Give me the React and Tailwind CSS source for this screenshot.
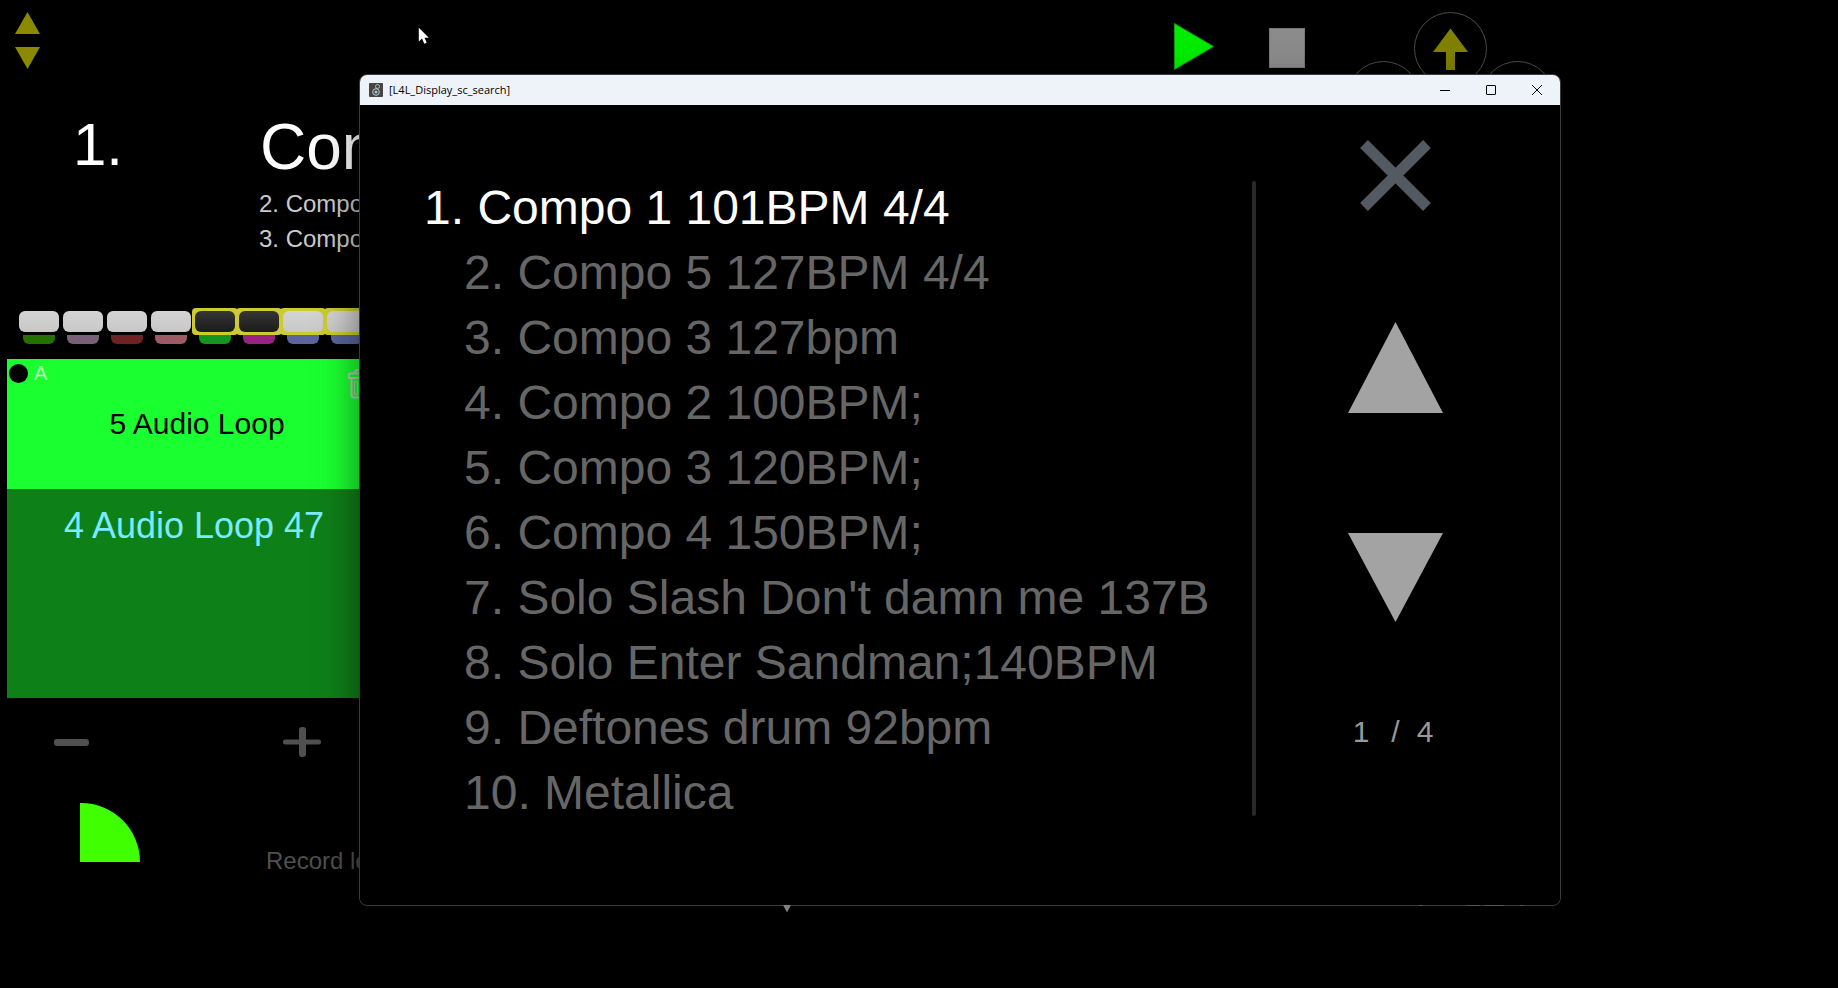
import React from 'react';

const songs = [
	'Compo 1 101BPM 4/4',
	'Compo 5 127BPM 4/4',
	'Compo 3 127bpm',
	'Compo 2 100BPM;',
	'Compo 3 120BPM;',
	'Compo 4 150BPM;',
	"Solo Slash Don't damn me 137B",
	'Solo Enter Sandman;140BPM',
	'Deftones drum 92bpm',
	'Metallica',
];

const LIGHT = 'bg-linear-to-b from-[#d4d4d4] to-[#c8c8c8]';
const DARK = 'bg-linear-to-b from-[#363636] to-[#1c1c1c]';

const pads = [
	{ face: LIGHT, tab: 'bg-[#247000]' },
	{ face: LIGHT, tab: 'bg-[#776078]' },
	{ face: LIGHT, tab: 'bg-[#6e2224]' },
	{ face: LIGHT, tab: 'bg-[#9c5a64]' },
	{ face: DARK, tab: 'bg-[#149420]', armed: true },
	{ face: DARK, tab: 'bg-[#9a2282]', armed: true },
	{ face: LIGHT, tab: 'bg-[#5a659c]', armed: true },
	{ face: LIGHT, tab: 'bg-[#5a659c]', armed: true },
];

const Triangle = ({ down, className }) => (
	<svg viewBox="0 0 100 100" preserveAspectRatio="none" className={className} fill="currentColor">
		<path d={down ? 'M0 0H100L50 100Z' : 'M50 0L100 100H0Z'} />
	</svg>
);

const TopBar = () => (
	<header className="flex h-[104px] items-start">
		<div className="flex flex-col gap-[13px] pl-[15px] pt-3 text-[#8b8900]">
			<button aria-label="Previous" className="block"><Triangle className="block h-[22px] w-[25px]" /></button>
			<button aria-label="Next" className="block"><Triangle down className="block h-[22px] w-[25px]" /></button>
		</div>
		<div className="ml-auto mr-[284px] flex items-start">
			<button aria-label="Play" className="mr-[55px] mt-[23px]">
				<svg width="40" height="47" viewBox="0 0 40 47" className="block"><path d="M.5 .5L39.5 23.5L.5 46.5Z" fill="#00ec00" stroke="#0a9a0a" strokeWidth="1" /></svg>
			</button>
			<button aria-label="Stop" className="mr-[42px] mt-7 h-10 w-9 border border-[#777] bg-[#8b8b8b]" />
			<button aria-label="Navigation pad" className="mt-3">
				<svg width="207" height="92" viewBox="0 0 207 92" className="block" fill="none">
					<g stroke="#4c4c4c">
						<circle cx="103.5" cy="36.5" r="36" />
						<circle cx="36.5" cy="85.5" r="36" />
						<circle cx="170.5" cy="85.5" r="36" />
					</g>
					<path d="M103.5 16.5L121 40H108V58H99V40H86Z" fill="#808000" />
				</svg>
			</button>
		</div>
	</header>
);

const TrashIcon = () => (
	<svg width="30" height="30" viewBox="0 0 30 30" fill="none" stroke="#b4ccb5" strokeWidth="2">
		<path d="M1 9V6Q1 4.500 2.500 4.500H27.500Q29 4.500 29 6V9ZM7 4V3Q7 1 9 1H21Q23 1 23 3V4" />
		<path d="M3.500 9V26Q3.500 28.500 6 28.500H24Q26.500 28.500 26.500 26V9" />
		<path strokeWidth="1" d="M6.500 12.500H9.500V25.500H6.500ZM13.500 12.500H16.500V25.500H13.500ZM20.500 12.500H23.500V25.500H20.500Z" />
	</svg>
);

const LoopPanel = () => (
	<main className="w-[380px]">
		<section className="flex pt-[10px] text-white">
			<div className="w-[260px] shrink-0 pl-[73px] pt-px text-6xl leading-[60px]">1.</div>
			<div className="whitespace-nowrap pt-px">
				<h1 className="text-[64px] leading-16">Compo</h1>
				<div className="-ml-px mt-[7px] text-2xl leading-[35px] text-[#cbcbcb]">
					<p>2. Compo</p>
					<p>3. Compo</p>
				</div>
			</div>
		</section>

		<div className="mt-[52px] flex pl-[17px]">
			{pads.map((pad, i) => (
				<button key={i} aria-label={`Pad ${i + 1}`} className="w-11 shrink-0">
					<span className={`-mx-px block rounded-[4px] p-[3px] ${pad.armed ? 'bg-[#cdcb30]' : ''}`}>
						<span className={`block h-[21px] rounded-md ${pad.face}`} />
					</span>
					<span className={`mx-auto block h-[9px] w-8 rounded-b-md ${pad.tab}`} />
				</button>
			))}
		</div>

		<section className="ml-[7px] mt-[15px] w-[380px]">
			<div className="relative flex h-[130px] items-center justify-center bg-[#1aff30]">
				<span className="absolute left-0.5 top-[5px] size-[19px] rounded-full bg-black" />
				<span className="absolute left-[27px] top-1 text-xl leading-5 text-[#b4ffbb]">A</span>
				<button aria-label="Delete" className="absolute right-[9px] top-2.5"><TrashIcon /></button>
				<span className="text-3xl leading-[30px] text-black">5 Audio Loop</span>
			</div>
			<div className="h-[209px] bg-[#0e8018] pr-1.5 pt-[17px] text-center text-4xl text-[#7aeaff]">4 Audio Loop 47</div>
		</section>

		<div className="flex items-center justify-between pl-[54px] pr-[58px] pt-[29px] text-[#505050]">
			<button aria-label="Less" className="h-[7px] w-[35px] rounded-[3px] bg-current" />
			<button aria-label="More">
				<svg width="39" height="30" viewBox="0 0 39 30" className="block" fill="currentColor">
					<rect x="16" width="7" height="30" rx="3" />
					<rect y="12.500" width="38" height="5" rx="2.500" />
				</svg>
			</button>
		</div>

		<div className="flex items-start pl-20 pt-[46px]">
			<div className="h-[59px] w-[60px] shrink-0 rounded-tr-full bg-[#3fff00]" />
			<span className="ml-[126px] mt-[46px] whitespace-nowrap text-2xl leading-6 text-[#505050]">Record level</span>
		</div>
	</main>
);

const TitleBar = () => (
	<div className="flex h-[30px] items-center bg-[#eef3fa] pl-[9px] text-black">
		<svg width="14" height="14" viewBox="0 0 14 14" fill="none">
			<rect width="14" height="14" rx="1" fill="#454545" />
			<circle cx="8.500" cy="3.500" r="2" stroke="#b5b5b5" />
			<circle cx="7" cy="9" r="3.300" stroke="#c8c8c8" />
			<circle cx="7" cy="9" r="1.500" fill="#7fd3dc" />
		</svg>
		<span className="ml-1.5 font-['Open_Sans','Noto_Sans',sans-serif] text-[11px]">[L4L_Display_sc_search]</span>
		<div className="ml-auto flex h-full">
			<button aria-label="Minimize" className="flex w-[46px] items-center justify-center">
				<svg width="10" height="10" viewBox="0 0 10 10"><path d="M0 5.500H10" stroke="#000" /></svg>
			</button>
			<button aria-label="Maximize" className="flex w-[46px] items-center justify-center">
				<svg width="10" height="10" viewBox="0 0 10 10"><rect x=".5" y=".5" width="9" height="9" rx=".5" stroke="#000" fill="none" /></svg>
			</button>
			<button aria-label="Close" className="flex w-[46px] items-center justify-center">
				<svg width="10" height="10" viewBox="0 0 10 10"><path d="M0 0L10 10M10 0L0 10" stroke="#000" /></svg>
			</button>
		</div>
	</div>
);

const SearchWindow = () => (
	<div className="absolute left-[359px] right-[277px] top-[74px] overflow-hidden rounded-lg border border-[#3a3a3a] bg-black shadow-[0_16px_40px_rgba(0,0,0,0.5)]">
		<TitleBar />
		<div className="flex">
			<ol className="min-w-0 flex-1 overflow-hidden pb-20 pl-16 pt-[70px]">
				{songs.map((song, i) => (
					<li key={song}>
						<button className={`block whitespace-nowrap text-5xl leading-[65px] ${i === 0 ? 'text-white' : 'pl-10 text-[#666]'}`}>
							{i + 1}. {song}
						</button>
					</li>
				))}
			</ol>
			<div className="mb-[89px] mt-[76px] w-1 rounded-full bg-[#262829]" />
			<div className="flex w-[304px] flex-col items-center pr-[26px] pt-[35px] text-[#a3a3a3]">
				<button aria-label="Close search">
					<svg width="71" height="71" viewBox="0 0 71 71" className="block"><path d="M4 4L67 67M67 4L4 67" stroke="#545a61" strokeWidth="11" /></svg>
				</button>
				<button aria-label="Page up" className="mt-[111px]"><Triangle className="block h-[91px] w-[95px]" /></button>
				<button aria-label="Page down" className="mt-[120px]"><Triangle down className="block h-[89px] w-[95px]" /></button>
				<div className="mt-[95px] flex pr-1 text-3xl leading-[30px] text-[#999]">
					<span>1</span>
					<span className="ml-[22px] mr-[17px]">/</span>
					<span>4</span>
				</div>
			</div>
		</div>
	</div>
);

export default function App() {
	return (
		<div className="relative min-h-screen overflow-hidden bg-black font-['Liberation_Sans',Arial,sans-serif]">
			<TopBar />
			<LoopPanel />
			<SearchWindow />
			{/* tip of the scroll marker and key outlines showing under the window */}
			<svg width="742" height="8" viewBox="0 0 742 8" className="pointer-events-none absolute left-[783px] top-[905px]">
				<path d="M0 0H8L4 7.500Z" fill="#808080" />
				<path d="M636 .5H640M683 .5H697M701 .5H721M737 .5H741" stroke="#555" />
			</svg>
			<svg width="13" height="18" viewBox="0 0 13 18" className="pointer-events-none absolute left-[418px] top-[27px]">
				<path d="M.8 .8V14.500L4 11.500L6.300 16.800L8.700 15.800L6.500 10.700H10.800Z" fill="#fff" />
			</svg>
		</div>
	);
}
